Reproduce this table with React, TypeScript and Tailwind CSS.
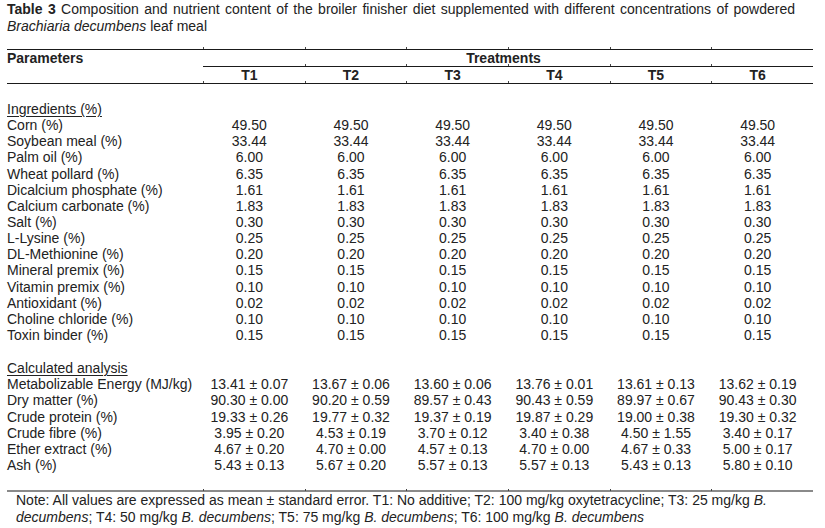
import type { ReactNode } from 'react'

const TREATMENTS = ['T1', 'T2', 'T3', 'T4', 'T5', 'T6']

const INGREDIENTS: [string, string][] = [
    ['Corn (%)', '49.50'],
    ['Soybean meal (%)', '33.44'],
    ['Palm oil (%)', '6.00'],
    ['Wheat pollard (%)', '6.35'],
    ['Dicalcium phosphate (%)', '1.61'],
    ['Calcium carbonate (%)', '1.83'],
    ['Salt (%)', '0.30'],
    ['L-Lysine (%)', '0.25'],
    ['DL-Methionine (%)', '0.20'],
    ['Mineral premix (%)', '0.15'],
    ['Vitamin premix (%)', '0.10'],
    ['Antioxidant (%)', '0.02'],
    ['Choline chloride (%)', '0.10'],
    ['Toxin binder (%)', '0.15']
]

const ANALYSIS: [string, string[]][] = [
    ['Metabolizable Energy (MJ/kg)', ['13.41 ± 0.07', '13.67 ± 0.06', '13.60 ± 0.06', '13.76 ± 0.01', '13.61 ± 0.13', '13.62 ± 0.19']],
    ['Dry matter (%)', ['90.30 ± 0.00', '90.20 ± 0.59', '89.57 ± 0.43', '90.43 ± 0.59', '89.97 ± 0.67', '90.43 ± 0.30']],
    ['Crude protein (%)', ['19.33 ± 0.26', '19.77 ± 0.32', '19.37 ± 0.19', '19.87 ± 0.29', '19.00 ± 0.38', '19.30 ± 0.32']],
    ['Crude fibre (%)', ['3.95 ± 0.20', '4.53 ± 0.19', '3.70 ± 0.12', '3.40 ± 0.38', '4.50 ± 1.55', '3.40 ± 0.17']],
    ['Ether extract (%)', ['4.67 ± 0.20', '4.70 ± 0.00', '4.57 ± 0.13', '4.70 ± 0.00', '4.67 ± 0.33', '5.00 ± 0.17']],
    ['Ash (%)', ['5.43 ± 0.13', '5.67 ± 0.20', '5.57 ± 0.13', '5.57 ± 0.13', '5.43 ± 0.13', '5.80 ± 0.10']]
]

// horizontal rule split per column, with the little tick marks the PDF leaves at column joins
function Rule({ full = true, gray = false }: { full?: boolean; gray?: boolean }) {
    const line = gray ? 'border-t-2 border-[#8a8a8a]' : 'border-t border-[#1a1a1a]'
    return (
        <div className="flex">
            {full && <div className={`w-[196px] ${line}`} />}
            {TREATMENTS.map((t, i) => (
                <div key={t} className={`relative flex-1 ${line}`}>
                    {(full || i > 0) && <span className="absolute -top-[3px] left-0 h-[2px] w-px bg-[#444]" />}
                </div>
            ))}
        </div>
    )
}

function Row({ label, values }: { label: ReactNode; values: string[] }) {
    return (
        <div className="grid h-[16.15px] grid-cols-[196px_repeat(6,minmax(0,1fr))] leading-[16px]">
            <div className="whitespace-nowrap">{label}</div>
            {values.map((v, i) => (
                <div key={i} className="whitespace-nowrap pr-[9px] text-center">
                    {v}
                </div>
            ))}
        </div>
    )
}

export default function App() {
    return (
        <div className="h-[528px] w-[825px] bg-white pl-[7px] pr-[12px] pt-px font-['Liberation_Sans',Arial,sans-serif] text-[14px] text-[#222]">
            <div className="leading-[17px]">
                <div className="w-[788px] text-justify [text-align-last:justify]">
                    <b>Table 3</b> Composition and nutrient content of the broiler finisher diet supplemented with different concentrations of powdered
                </div>
                <div>
                    <i>Brachiaria decumbens</i> leaf meal
                </div>
            </div>

            <div className="mt-[14px]">
                <Rule />
                <div className="grid grid-cols-[196px_1fr] font-bold">
                    <div className="leading-[16px]">Parameters</div>
                    <div>
                        <div className="h-[16px] pr-[9px] text-center leading-[16px]">Treatments</div>
                        <Rule full={false} />
                        <div className="grid h-[16px] grid-cols-6 leading-[16px]">
                            {TREATMENTS.map((t) => (
                                <div key={t} className="pr-[9px] text-center">
                                    {t}
                                </div>
                            ))}
                        </div>
                    </div>
                </div>
                <Rule />

                <div className="pt-[17px]">
                    <Row label={<span className="underline underline-offset-2">Ingredients (%)</span>} values={[]} />
                    {INGREDIENTS.map(([label, v]) => (
                        <Row key={label} label={label} values={TREATMENTS.map(() => v)} />
                    ))}
                    <div className="h-[17px]" />
                    <Row label={<span className="underline underline-offset-2">Calculated analysis</span>} values={[]} />
                    {ANALYSIS.map(([label, vals]) => (
                        <Row key={label} label={label} values={vals} />
                    ))}
                </div>

                <div className="mt-[17px]">
                    <Rule gray />
                </div>
                <div className="pl-[9px] leading-[17px]">
                    Note: All values are expressed as mean ± standard error. T1: No additive; T2: 100 mg/kg oxytetracycline; T3: 25 mg/kg <i>B.</i>
                    <br />
                    <i>decumbens</i>; T4: 50 mg/kg <i>B. decumbens</i>; T5: 75 mg/kg <i>B. decumbens</i>; T6: 100 mg/kg <i>B. decumbens</i>
                </div>
            </div>
        </div>
    )
}
